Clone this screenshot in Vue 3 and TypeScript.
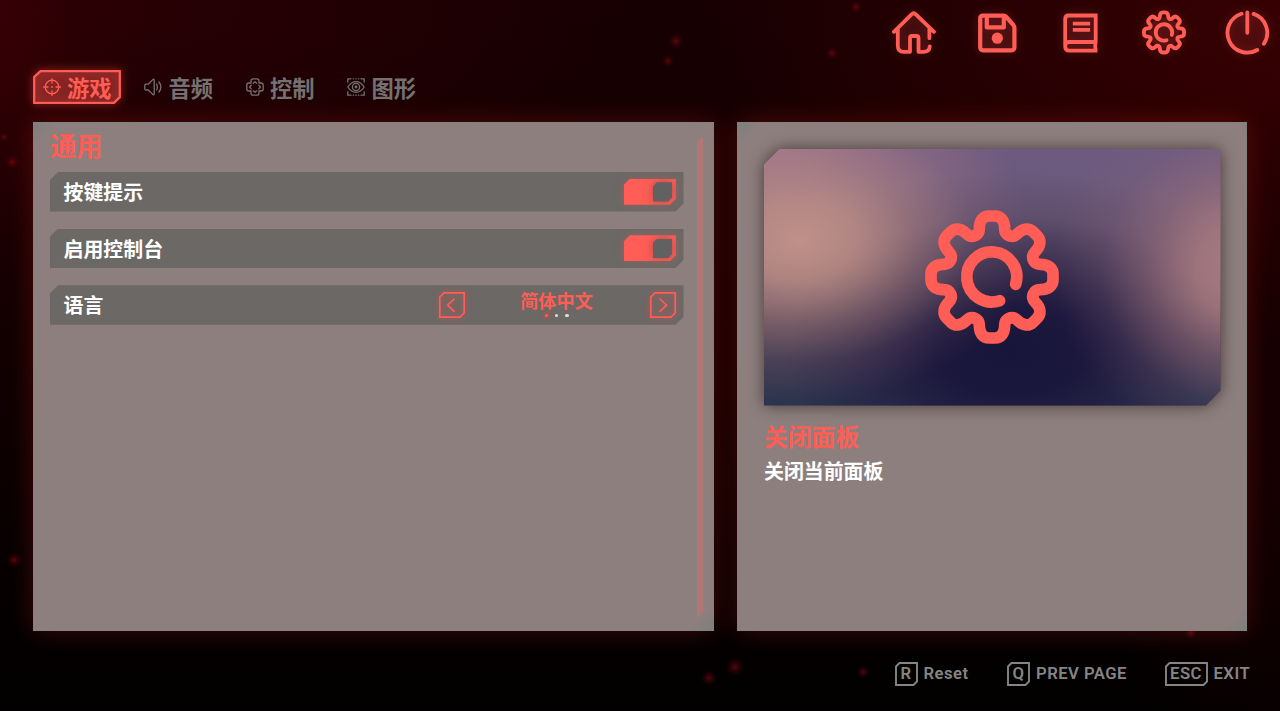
<script setup lang="ts">
import { ref } from 'vue'

interface Tab { id: string; label: string }
interface KeyHint { key: string; label: string; kind: string }

const tabs: Tab[] = [
  { id: 'game', label: '游戏' },
  { id: 'audio', label: '音频' },
  { id: 'control', label: '控制' },
  { id: 'graphics', label: '图形' },
]
const activeTab = ref('game')
const toggles = ref([
  { label: '按键提示', on: true },
  { label: '启用控制台', on: true },
])
const languages = ['简体中文', 'English', '日本語']
const language = ref(0)
const hints: KeyHint[] = [
  { key: 'R', label: 'Reset', kind: 'reset' },
  { key: 'Q', label: 'PREV PAGE', kind: 'prev' },
  { key: 'ESC', label: 'EXIT', kind: 'exit' },
]
const sparks = [
  [676, 41, 5], [668, 61, 4], [856, 7, 4], [832, 53, 4], [12, 162, 5], [14, 560, 5],
  [4, 137, 3], [735, 667, 6], [709, 678, 5], [863, 672, 4], [1191, 633, 4],
]
const teeth = [0, 45, 90, 135, 180, 225, 270, 315]
const tooth = 'M-51.3-123.9C-43-127.3-38-134-38-145C-38-170-26-183-9-183H9C26-183 38-170 38-145C38-134 43-127.3 51.3-123.9'
const ring = 'M71 22A75 75 0 1 0 23 71'
function step(d: number) {
  language.value = (language.value + d + languages.length) % languages.length
}
</script>

<template>
  <div class="screen">
    <svg class="sparks" viewBox="0 0 1280 711">
      <defs>
        <radialGradient id="spark">
          <stop offset="0" stop-color="#980a16" stop-opacity=".55" />
          <stop offset=".35" stop-color="#6a0610" stop-opacity=".4" />
          <stop offset="1" stop-color="#500008" stop-opacity="0" />
        </radialGradient>
      </defs>
      <circle v-for="(s, i) in sparks" :key="i" :cx="s[0]" :cy="s[1]" :r="s[2] * 1.6" fill="url(#spark)" />
    </svg>

    <header class="top-menu">
      <button class="menu-btn" aria-label="home">
        <svg viewBox="0 0 44 44">
          <path class="tint" d="M6 17L21.7 2L37.5 17V40H26.3V25H18V41H6z" />
          <path d="M1.9 20.8L19.6 3.3Q21.7 1.2 23.8 3.3L42 20.8M37.4 18V27.2M37.8 35.3Q37.4 40.8 31.5 40.8H26.5V27Q26.5 25 24.5 25H20Q18 25 18 27V40.8H11.8Q5.8 40.8 5.8 35V18" />
        </svg>
      </button>
      <button class="menu-btn" aria-label="save">
        <svg viewBox="0 0 44 44">
          <path class="tint" d="M5 4.5H30L39.5 15V39H5z" />
          <path class="thick" d="M8 4.6H28.7Q30 4.6 31 5.7L38.4 14Q39.4 15.2 39.4 16.8V36.3Q39.4 39.3 36.4 39.3H8.2Q5.2 39.3 5.2 36.3V7.4Q5.2 4.6 8 4.6zM11.8 5V16.4H28.8V5" />
          <circle class="solid" cx="22.3" cy="27.2" r="5.6" />
        </svg>
      </button>
      <button class="menu-btn" aria-label="log">
        <svg viewBox="-.8 0 44 44">
          <path class="tint" d="M6 4.5H37V40H6z" />
          <path class="square" d="M36.9 31V4.5H10Q6.4 4.5 6.4 8V35.5Q6.4 39.7 10.5 39.7H38.6M6.4 35Q6.4 31 10.4 31H38.6M36.9 31Q35.8 35.2 36.9 39.7M14 12.7H31.3M14 18.8H31.3" />
        </svg>
      </button>
      <button class="menu-btn" aria-label="settings">
        <svg viewBox="-201 -196 402 402">
          <circle class="tint" r="140" />
          <g class="gear">
            <path v-for="a in teeth" :key="a" :d="tooth" :transform="`rotate(${a})`" />
            <path :d="ring" />
          </g>
        </svg>
      </button>
      <button class="menu-btn" aria-label="power">
        <svg viewBox="0 0 44 44">
          <circle class="tint" cx="22.2" cy="21.8" r="19" />
          <path d="M22.3 1.3V21.8M16.6 2.7A19.9 19.9 0 1 0 32.3 39M28.6 2.9A19.9 19.9 0 0 1 38.9 32.8" />
        </svg>
      </button>
    </header>

    <nav class="tabs">
      <button v-for="t in tabs" :key="t.id" class="tab" :class="{ active: t.id === activeTab }" @click="activeTab = t.id">
        <svg v-if="t.id === activeTab" class="frame" viewBox="0 0 88 34">
          <path d="M7.5 1.2H86.8V27.2L81 32.8H1.2V7z" />
        </svg>
        <svg class="tab-icon" viewBox="0 0 18 18">
          <template v-if="t.id === 'game'">
            <circle cx="9" cy="9" r="6.8" /><path d="M9 .6V5M9 13V17.4M.6 9H5M13 9H17.4" />
            <circle class="dot" cx="9" cy="9" r=".3" />
          </template>
          <path v-else-if="t.id === 'audio'" d="M1.8 6.2H4.2L8.8 1.6Q10.2.6 10.2 2.2V15.8Q10.2 17.4 8.8 16.4L4.2 12H1.8Q.8 12 .8 11V7.2Q.8 6.2 1.8 6.2zM12.7 6Q14.2 9 12.7 12M15 4Q18.8 9 15 14" />
          <template v-else-if="t.id === 'control'">
            <path d="M7 .8H11Q13 .8 13 3V5H15Q17.2 5 17.2 7V11Q17.2 13 15 13H13V15Q13 17.2 11 17.2H7Q5 17.2 5 15V13H3Q.8 13 .8 11V7Q.8 5 3 5H5V3Q5 .8 7 .8z" />
            <path d="M7.3 5.2L9 3.6L10.7 5.2M7.3 12.8L9 14.4L10.7 12.8M5.2 7.3L3.6 9L5.2 10.7M12.8 7.3L14.4 9L12.8 10.7" />
          </template>
          <template v-else>
            <path d="M.8 4V.8H4M14 .8H17.2V4M.8 14V17.2H4M14 17.2H17.2V14M6.2 .8H6.6M8.8 .8H9.2M11.4 .8H11.8M6.2 17.2H6.6M8.8 17.2H9.2M11.4 17.2H11.8M.8 9Q4.5 3.6 9 3.6Q13.5 3.6 17.2 9Q13.5 14.4 9 14.4Q4.5 14.4 .8 9z" />
            <circle cx="9" cy="9" r="3.6" /><circle class="dot" cx="9" cy="9" r=".8" />
          </template>
        </svg>
        <span>{{ t.label }}</span>
      </button>
    </nav>

    <main class="content">
      <section class="panel options">
        <div class="option-list">
          <h2>通用</h2>
          <div v-for="o in toggles" :key="o.label" class="row">
            <span class="row-label">{{ o.label }}</span>
            <button class="toggle" :class="{ off: !o.on }" :aria-label="o.label" @click="o.on = !o.on">
              <i class="toggle-body"><i class="knob-wrap"><i class="knob" /></i></i>
            </button>
          </div>
          <div class="row">
            <span class="row-label">语言</span>
            <div class="selector">
              <button class="arrow" aria-label="previous" @click="step(-1)">
                <svg viewBox="0 0 26 26"><path d="M5 .8H25.2V21L21 25.2H.8V5z" /><path d="M15.2 7L8.6 13.2L15.2 19.4" /></svg>
              </button>
              <div class="value">
                <span>{{ languages[language] }}</span>
                <div class="dots"><i v-for="(l, i) in languages" :key="l" :class="{ current: i === language }" /></div>
              </div>
              <button class="arrow" aria-label="next" @click="step(1)">
                <svg viewBox="0 0 26 26"><path d="M5 .8H25.2V21L21 25.2H.8V5z" /><path d="M10 7L16.6 13.2L10 19.4" /></svg>
              </button>
            </div>
          </div>
        </div>
        <div class="scrollbar" />
      </section>

      <section class="panel detail">
        <div class="preview-shadow">
          <div class="preview">
            <svg viewBox="-201 -201 402 402">
              <g class="gear">
                <path v-for="a in teeth" :key="a" :d="tooth" :transform="`rotate(${a})`" />
                <path :d="ring" />
              </g>
            </svg>
          </div>
        </div>
        <h3>关闭面板</h3>
        <p>关闭当前面板</p>
      </section>
    </main>

    <footer class="hints">
      <div v-for="h in hints" :key="h.key" class="hint" :class="h.kind">
        <span class="key">
          <svg v-if="h.key.length === 1" viewBox="0 0 23 24"><path d="M4.5 1H22V19.5L18.5 23H1V4.5z" /></svg>
          <svg v-else viewBox="0 0 43 24"><path d="M4.5 1H42V19.5L38.5 23H1V4.5z" /></svg>
          <b>{{ h.key }}</b>
        </span>
        <span class="hint-label">{{ h.label }}</span>
      </div>
    </footer>
  </div>
</template>

<style>
body {
  background: #080001;
  overflow: hidden;
}
</style>

<style scoped>
* {
  box-sizing: border-box;
}
.screen {
  position: relative;
  display: flex;
  flex-direction: column;
  width: 1280px;
  height: 711px;
  overflow: hidden;
  color: #fff;
  font-family: "Noto Sans CJK SC", sans-serif;
  font-weight: 700;
  background:
    radial-gradient(ellipse 150px 320px at 0 10px, rgba(60, 0, 6, .8) 0, rgba(50, 0, 4, .4) 50%, rgba(50, 0, 4, 0) 100%),
    radial-gradient(ellipse 600px 330px at 1290px 20px, #380003 0, rgba(46, 0, 3, 0) 100%),
    radial-gradient(ellipse 520px 230px at 130px 10px, rgba(42, 0, 4, .9), rgba(32, 0, 3, 0)),
    radial-gradient(ellipse 220px 400px at 1290px 420px, #170002, rgba(20, 0, 2, 0)),
    linear-gradient(#170002 0, #120001 50%, #050001 85%, #020000 100%);
}
button {
  border: 0;
  padding: 0;
  background: none;
  color: inherit;
  font: inherit;
}
svg {
  display: block;
  overflow: visible;
  fill: none;
  stroke: currentColor;
  stroke-linecap: round;
  stroke-linejoin: round;
}
.sparks {
  position: absolute;
  inset: 0;
  width: 1280px;
  height: 711px;
  stroke: none;
}
.top-menu {
  position: relative;
  display: flex;
  justify-content: flex-end;
  gap: 39.3px;
  height: 70px;
  padding: 11px 11px 0 0;
  color: #ff5d55;
}
.menu-btn {
  width: 44px;
  height: 44px;
}
.menu-btn svg {
  width: 44px;
  height: 44px;
  stroke-width: 3.8;
  filter: drop-shadow(0 0 5px rgba(255, 93, 85, .22));
}
.tint {
  fill: rgba(255, 93, 85, .1);
  stroke: none;
}
.thick {
  stroke-width: 4.2;
}
.square {
  stroke-linecap: butt;
  stroke-linejoin: miter;
}
.solid {
  fill: currentColor;
  stroke: none;
}
.gear {
  stroke-width: 35;
}
.tabs {
  position: relative;
  display: flex;
  gap: 13.5px;
  height: 52px;
  padding-left: 33px;
  color: #757171;
}
.tab {
  position: relative;
  display: flex;
  align-items: center;
  width: 88px;
  height: 34px;
  padding-left: 9.5px;
  font-size: 22.3px;
  line-height: 34px;
}
.tab span {
  position: relative;
  margin: 0 0 0 6.5px;
  white-space: nowrap;
}
.tab.active {
  color: #ff5d55;
}
.tab-icon {
  position: relative;
  flex: none;
  width: 18px;
  height: 18px;
  stroke-width: 1.3;
}
.dot {
  fill: currentColor;
}
.frame {
  position: absolute;
  inset: 0;
  width: 88px;
  height: 34px;
  fill: rgba(255, 93, 85, .28);
  stroke-width: 2.3;
  stroke-linejoin: miter;
  filter: drop-shadow(0 0 4px rgba(255, 70, 65, .75));
}
.content {
  position: relative;
  display: flex;
  gap: 23px;
  height: 509px;
  padding-left: 33px;
}
.panel {
  border: 1px solid #838281;
  background:
    linear-gradient(135deg, #7d7f7d 0, rgba(125, 127, 125, 0) 17px),
    linear-gradient(315deg, #7d7f7d 0, rgba(125, 127, 125, 0) 17px),
    #8c7f7e;
  box-shadow: 0 0 24px rgba(255, 45, 40, .22);
}
.options {
  display: flex;
  justify-content: space-between;
  width: 681px;
  padding: 6px 10px 0 16px;
}
.option-list {
  width: 633.5px;
}
h2,
h3,
p {
  margin: 0;
}
h2 {
  height: 43px;
  font-size: 26.3px;
  line-height: 32px;
  color: #ff5d55;
}
.row {
  display: flex;
  align-items: center;
  justify-content: space-between;
  height: 39.5px;
  margin-bottom: 17.1px;
  padding: 0 7.7px 0 13.6px;
  background: #6b6866;
  clip-path: polygon(8px 0, 100% 0, 100% calc(100% - 8px), calc(100% - 8px) 100%, 0 100%, 0 8px);
}
.row-label {
  font-size: 19.9px;
  line-height: 30px;
  margin-top: 1px;
}
.toggle {
  width: 52px;
  height: 26px;
  filter: drop-shadow(0 0 4px rgba(255, 93, 85, .25));
}
.toggle-body {
  display: flex;
  justify-content: flex-end;
  width: 52px;
  height: 26px;
  padding: 3.5px;
  background: #ff5d55;
  clip-path: polygon(6px 0, 100% 0, 100% 20px, 46px 100%, 0 100%, 0 6px);
}
.toggle.off .toggle-body {
  justify-content: flex-start;
}
.knob-wrap {
  display: block;
  width: 19.3px;
  height: 19.3px;
  filter: drop-shadow(0 0 4px rgba(90, 60, 60, .5));
}
.knob {
  display: block;
  width: 19.3px;
  height: 19.3px;
  background: #616161;
  clip-path: polygon(4px 0, 100% 0, 100% 15px, 15px 100%, 0 100%, 0 4px);
}
.selector {
  display: flex;
  align-items: center;
  justify-content: space-between;
  width: 236.5px;
  height: 39.5px;
  color: #ff5d55;
}
.arrow,
.arrow svg {
  width: 26px;
  height: 26px;
}
.arrow svg {
  stroke-width: 1.7;
  stroke-linejoin: miter;
  filter: drop-shadow(0 0 3px rgba(255, 70, 65, .65));
}
.value {
  display: flex;
  flex-direction: column;
  align-items: center;
  margin: 0 2px 5px 0;
  font-size: 18.2px;
  line-height: 24px;
}
.dots {
  display: flex;
  gap: 7.2px;
  margin-top: 2.5px;
}
.dots i {
  width: 3.2px;
  height: 3.2px;
  border-radius: 50%;
  background: #dcdcdc;
}
.dots .current {
  background: #ff5d55;
  box-shadow: 0 0 4px 1px rgba(255, 60, 55, .8);
}
.scrollbar {
  width: 6.5px;
  height: 478px;
  margin-top: 9px;
  background: #b27674;
  clip-path: polygon(4px 0, 100% 0, 100% 474px, 2.5px 100%, 0 100%, 0 4px);
}
.detail {
  width: 510px;
  padding: 25.5px 26px 0;
}
.preview-shadow {
  width: 456.5px;
  height: 257px;
  filter: drop-shadow(0 0 8px rgba(35, 20, 20, .65));
}
.preview {
  display: grid;
  place-items: center;
  height: 257px;
  color: #ff5d55;
  clip-path: polygon(16px 0, 100% 0, 100% 242px, 442px 100%, 0 100%, 0 16px);
  background:
    radial-gradient(ellipse 235px 160px at 36px 92px, #bf9089 0, rgba(190, 143, 134, .82) 25%, rgba(183, 137, 130, .46) 50%, rgba(175, 130, 132, .14) 75%, rgba(170, 125, 130, 0) 100%),
    radial-gradient(ellipse 190px 180px at 480px 120px, #aa7c80 0, rgba(168, 122, 127, .86) 25%, rgba(155, 112, 123, .5) 50%, rgba(140, 103, 125, .16) 75%, rgba(135, 100, 125, 0) 100%),
    radial-gradient(ellipse 300px 180px at 248px 202px, #18153a 0, rgba(25, 21, 59, .92) 25%, rgba(34, 26, 64, .6) 50%, rgba(42, 30, 68, .2) 75%, rgba(48, 34, 70, 0) 100%),
    radial-gradient(ellipse 250px 140px at 0 0, rgba(160, 115, 140, .95), rgba(150, 110, 136, .5) 50%, rgba(150, 110, 140, 0)),
    linear-gradient(#6c5a80 0, #6d5a76 30%, #625068 50%, #4a3f53 70%, #373a50 88%, #2b384f 100%);
}
.preview svg {
  width: 134px;
  height: 134px;
}
h3 {
  margin-top: 12px;
  font-size: 23.8px;
  line-height: 36px;
  color: #ff5d55;
}
p {
  margin-top: 1px;
  font-size: 19.9px;
  line-height: 32px;
}
.hints {
  position: relative;
  display: flex;
  justify-content: flex-end;
  margin-top: 30px;
  padding-right: 30px;
  font-family: Roboto, "Liberation Sans", sans-serif;
  font-size: 16.7px;
  font-weight: 600;
  letter-spacing: .45px;
  color: #858585;
}
.hint {
  display: flex;
  align-items: center;
  height: 24px;
}
.reset {
  width: 112.5px;
}
.prev {
  width: 157.5px;
}
.exit {
  width: 85.5px;
}
.key {
  position: relative;
  display: grid;
  flex: none;
  place-items: center;
  height: 24px;
  margin-right: 6px;
}
.key svg {
  grid-area: 1 / 1;
  height: 24px;
  stroke-width: 1.9;
  stroke-linejoin: miter;
}
.key b {
  grid-area: 1 / 1;
  font-weight: 600;
  line-height: 24px;
  margin-top: 1px;
}
.hint-label {
  margin-top: 1px;
  white-space: nowrap;
}
</style>
